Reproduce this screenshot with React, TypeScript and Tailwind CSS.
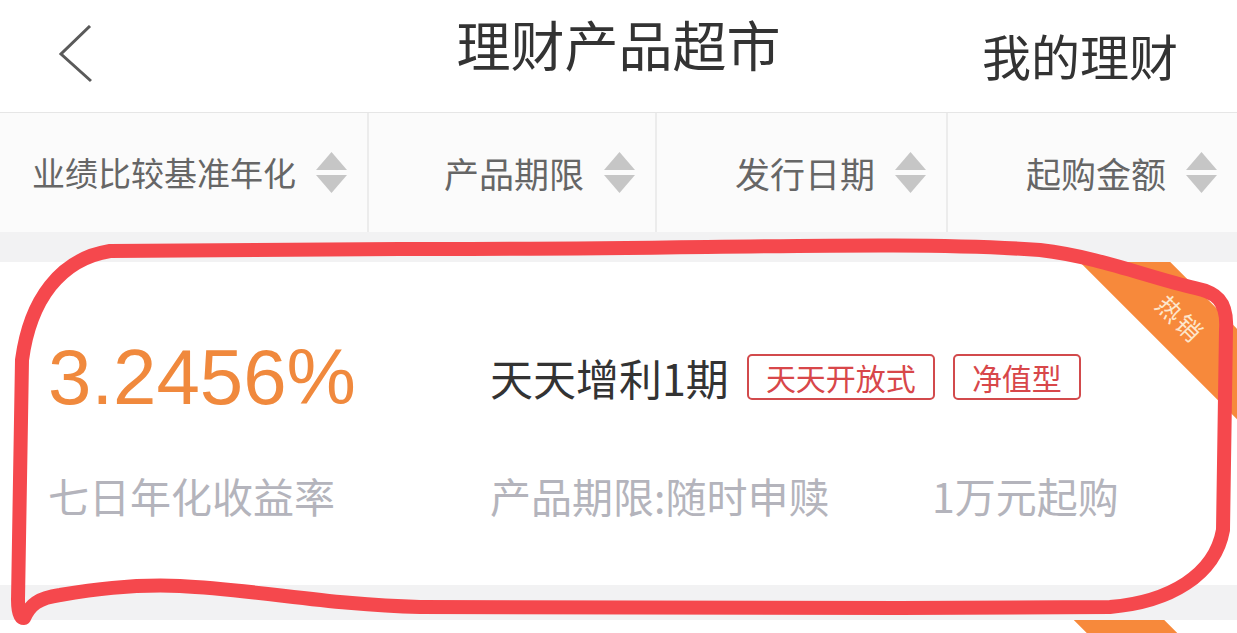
import type { ReactNode } from "react";

const CJK = "font-['Noto_Sans_CJK_SC',sans-serif]";

const FILTERS = [
	{ label: "业绩比较基准年化", size: "text-[33px]" },
	{ label: "产品期限", size: "text-[35px]" },
	{ label: "发行日期", size: "text-[35px]" },
	{ label: "起购金额", size: "text-[35px]" },
];

function SortIcon() {
	return (
		<svg width="31" height="41" viewBox="0 0 31 41" className="flex-none">
			<polygon points="15.5,0 31,18 0,18" fill="#c6c6c6" />
			<polygon points="0,23 31,23 15.5,41" fill="#c6c6c6" />
		</svg>
	);
}

function Tag({ children }: { children: ReactNode }) {
	return (
		<span className="h-[46px] px-[17px] flex items-center rounded-[5px] border-2 border-[#d24a4c] text-[30px] leading-none text-[#d8474a]">
			{children}
		</span>
	);
}

function Ribbon() {
	return (
		<div className="absolute left-[1056px] top-[24px] w-[250px] h-[64px] rotate-45 bg-[#f7893b] flex items-center justify-center">
			<span className="text-[25px] leading-none text-[#fde6cc] tracking-[2px]">
				热销
			</span>
		</div>
	);
}

function ProductCard() {
	return (
		<div className="relative bg-white overflow-hidden pt-[80px] pb-[65px] pl-12">
			<Ribbon />
			<div className="grid grid-cols-[442px_442px_1fr]">
				<div className="h-[70px] flex items-center font-['Liberation_Sans',sans-serif] text-[78px] leading-none text-[#f0893d]">
					3.2456%
				</div>
				<div className="col-span-2 h-[70px] flex items-center gap-[18px]">
					<span className="text-[43px] leading-none text-[#333]">
						天天增利1期
					</span>
					<Tag>天天开放式</Tag>
					<Tag>净值型</Tag>
				</div>
			</div>
			<div className="grid grid-cols-[442px_442px_1fr] mt-[58px] h-[50px] items-center text-[41px] leading-none text-[#b4b4bc]">
				<span>七日年化收益率</span>
				<span>产品期限:随时申赎</span>
				<span>1万元起购</span>
			</div>
		</div>
	);
}

// 下一张卡片只露出顶部
function NextCardTop() {
	return (
		<div className="relative h-[20px] bg-white overflow-hidden">
			<div className="absolute left-[1050px] top-[24px] w-[250px] h-[64px] rotate-45 bg-[#f7893b]" />
		</div>
	);
}

function Annotation() {
	return (
		<svg
			className="absolute inset-0 pointer-events-none"
			width="1237"
			height="633"
			viewBox="0 0 1237 633"
		>
			<path
				d="M 24 618 C 30 605, 38 598, 60 595 C 90 590, 130 584, 180 586 C 260 590, 330 605, 420 607 L 900 608 L 1110 607 C 1170 602, 1215 575, 1223 530 L 1226 330 C 1228 300, 1215 292, 1195 288 C 1150 278, 1100 257, 1040 250 C 900 240, 700 250, 400 249 L 110 251 C 60 259, 30 300, 22 360 L 18 600 C 18 612, 20 618, 24 618"
				fill="none"
				stroke="#f5484d"
				strokeWidth="14"
				strokeLinecap="round"
				strokeLinejoin="round"
			/>
		</svg>
	);
}

function App() {
	return (
		<div className={`relative h-[633px] w-[1237px] overflow-hidden bg-[#f2f2f3] ${CJK}`}>
			{/* 顶部导航 */}
			<header className="h-[113px] bg-white border-b border-[#e6e6e6] flex items-center justify-between pl-[58px] pr-[59px]">
				<svg width="36" height="60" viewBox="0 0 36 60" className="mb-[2px]">
					<polyline
						points="32,1 3,29 33,56"
						fill="none"
						stroke="#5a5a5a"
						strokeWidth="3"
					/>
				</svg>
				<h1 className="absolute left-0 right-0 top-[17px] text-center text-[54px] leading-none text-[#333] pointer-events-none">
					理财产品超市
				</h1>
				<span className="text-[49px] leading-none text-[#333] mb-[3px]">
					我的理财
				</span>
			</header>

			{/* 排序栏 */}
			<div className="h-[119px] bg-[#fbfbfb] grid grid-cols-[369px_288px_291px_1fr]">
				{FILTERS.map((f, i) => (
					<div
						key={f.label}
						className={`flex items-center justify-end gap-[20px] pr-[20px] ${
							i < 3 ? "border-r-2 border-[#ececec]" : ""
						}`}
					>
						<span className={`${f.size} leading-none text-[#666]`}>
							{f.label}
						</span>
						<SortIcon />
					</div>
				))}
			</div>

			<div className="h-[30px]" />
			<ProductCard />
			<div className="h-[35px]" />
			<NextCardTop />

			<Annotation />
		</div>
	);
}

export default App;
